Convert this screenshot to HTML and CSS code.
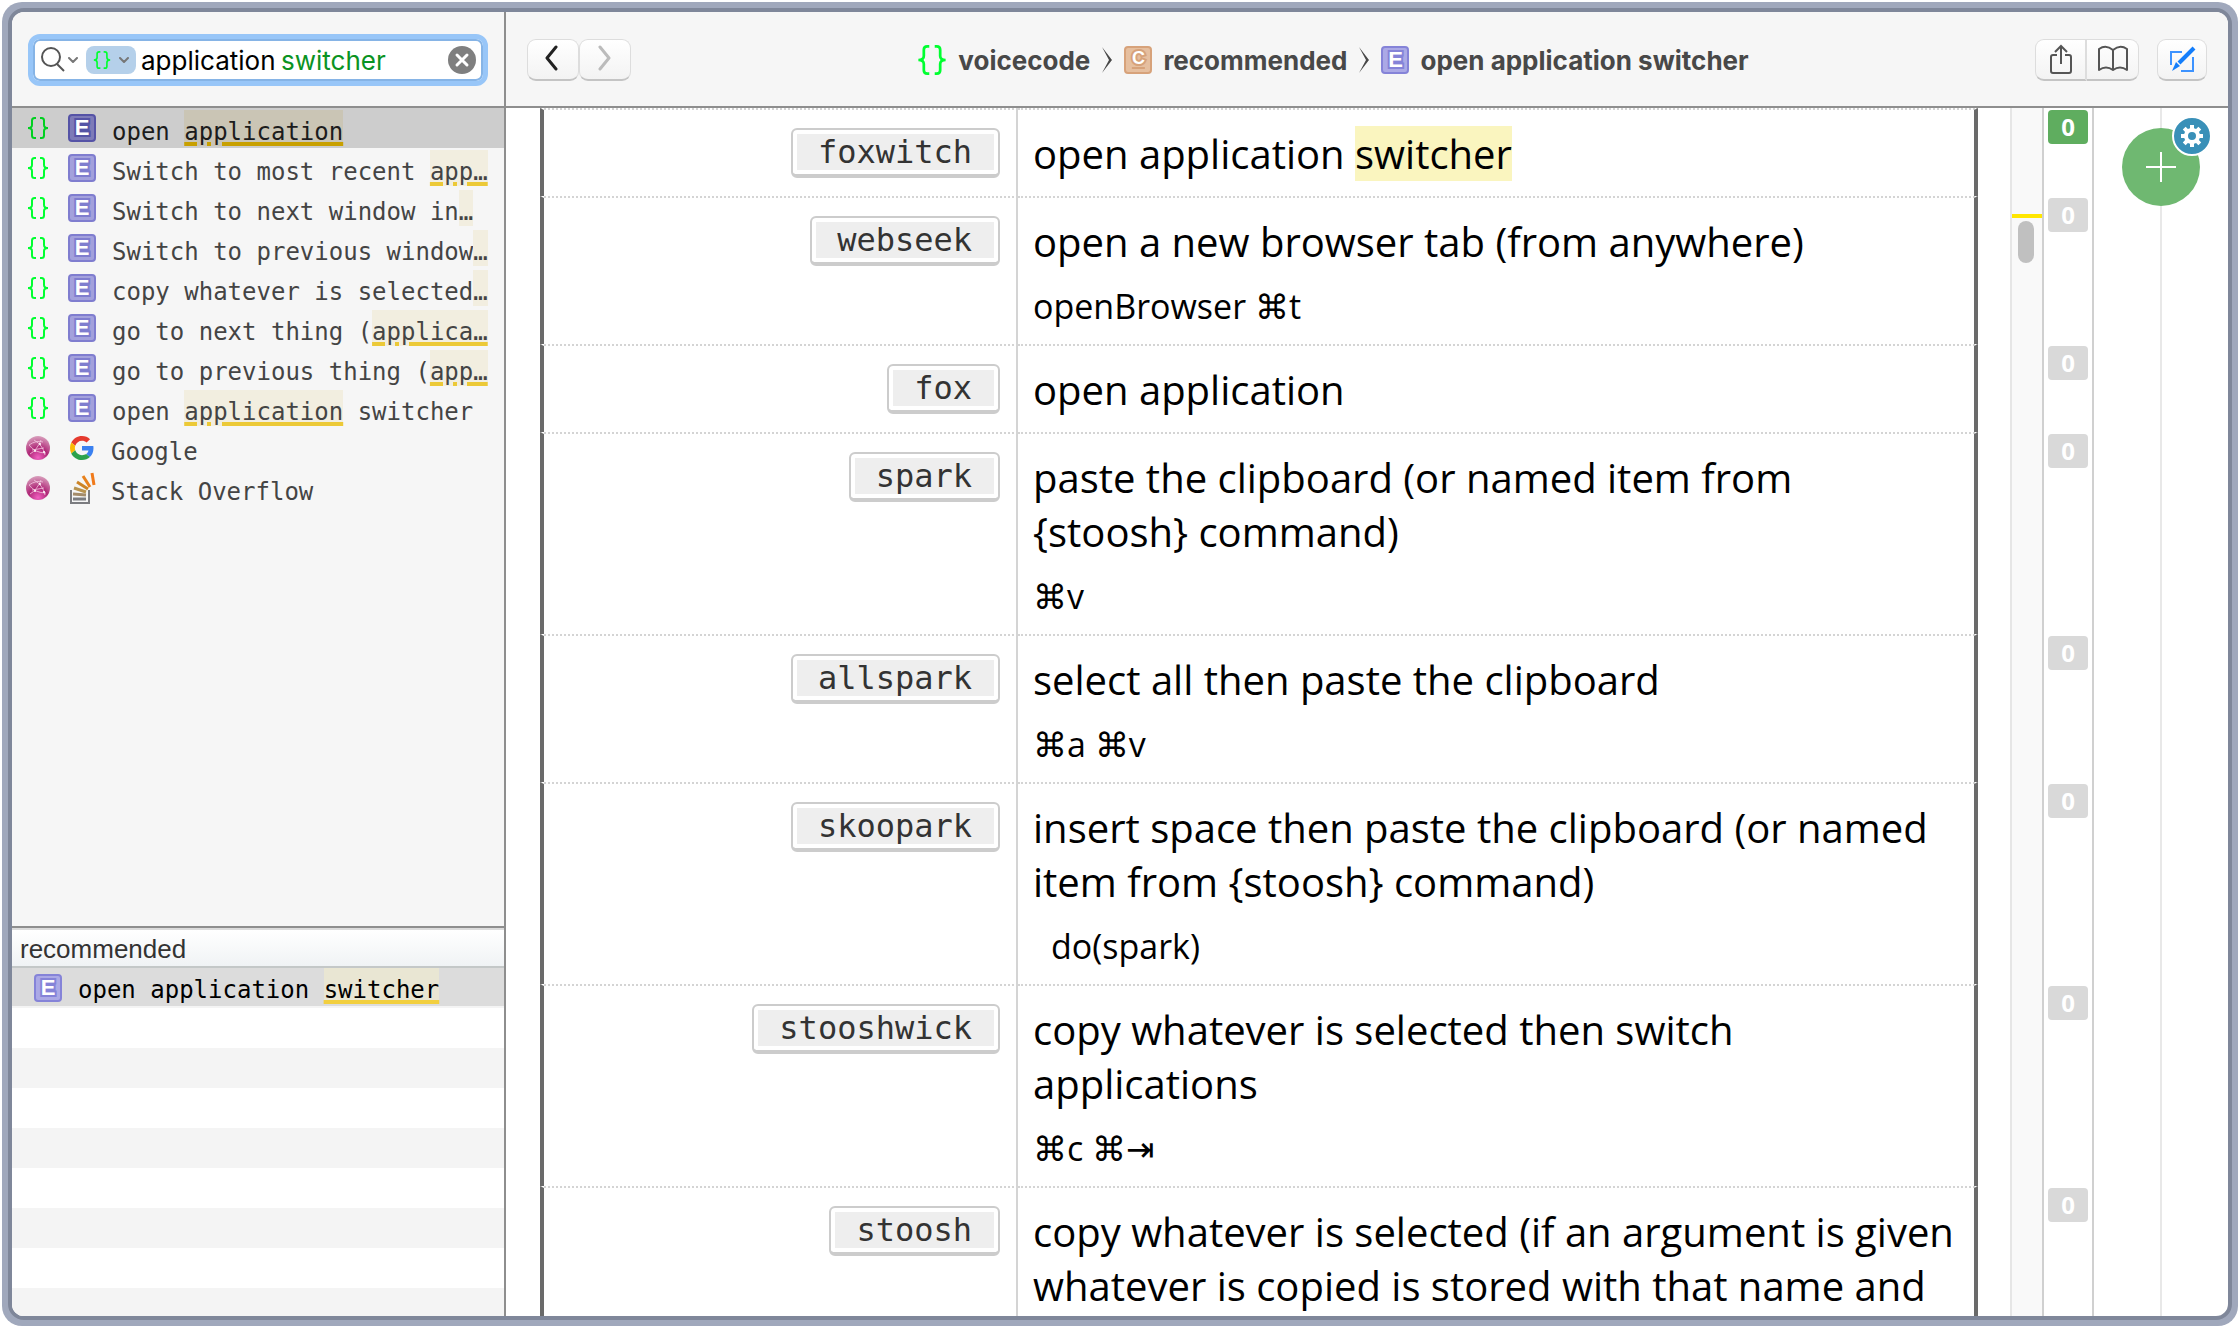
FILE: index.html
```html
<!DOCTYPE html>
<html lang="en">
<head>
<meta charset="utf-8">
<meta name="viewport" content="width=device-width, initial-scale=1">
<title>open application switcher</title>
<link rel="stylesheet" href="styles.css">
</head>
<body>
<svg class="sprite" aria-hidden="true">
  <defs>
    <radialGradient id="globe-fill" cx="50%" cy="90%" r="90%">
      <stop offset="0" stop-color="#f060c0"/>
      <stop offset=".45" stop-color="#b02878"/>
      <stop offset="1" stop-color="#d9a0bd"/>
    </radialGradient>
  </defs>
  <symbol id="braces" viewBox="0 0 22 22">
    <path d="M9 1H7.500Q5 1 5 3.500V8Q5 11 1 11Q5 11 5 14V18.500Q5 21 7.500 21H9M13 1H14.500Q17 1 17 3.500V8Q17 11 21 11Q17 11 17 14V18.500Q17 21 14.500 21H13" fill="none" stroke="currentColor" stroke-width="2"/>
  </symbol>
  <symbol id="chevron" viewBox="0 0 10 6">
    <path d="M1 1l4 4 4-4" fill="none" stroke="currentColor" stroke-width="2" stroke-linecap="round" stroke-linejoin="round"/>
  </symbol>
  <symbol id="separator" viewBox="0 0 12 26">
    <path d="M1 0L11 13L1 26L8 13z" fill="currentColor"/>
  </symbol>
  <symbol id="globe" viewBox="0 0 24 24">
    <circle cx="12" cy="12" r="12" fill="url(#globe-fill)"/>
    <path d="M3 9Q9 17 20 17M4 18Q11 14 15 4M8 4Q17 9 19 19M3 9Q10 4 17 6M6 14L18 12" fill="none" stroke="#f3c6df" stroke-width="1" opacity=".8"/>
    <circle cx="9" cy="15" r="1" fill="#fff"/><circle cx="14" cy="8" r="1" fill="#fff"/><circle cx="18" cy="16" r="1" fill="#fff"/>
  </symbol>
  <symbol id="google" viewBox="0 0 48 48">
    <path fill="#e53a2e" d="M24 9.500c3.540 0 6.710 1.220 9.210 3.600l6.850-6.850C35.900 2.380 30.470 0 24 0 14.620 0 6.510 5.380 2.560 13.220l7.980 6.190C12.430 13.720 17.740 9.500 24 9.500z"/>
    <path fill="#3a80f0" d="M46.980 24.550c0-1.570-.15-3.090-.38-4.550H24v9.020h12.940c-.58 2.960-2.260 5.480-4.780 7.180l7.730 6c4.510-4.180 7.090-10.360 7.090-17.650z"/>
    <path fill="#fbb905" d="M10.530 28.590c-.48-1.450-.76-2.990-.76-4.590s.27-3.140.76-4.590l-7.980-6.190C.92 16.460 0 20.120 0 24c0 3.880.92 7.540 2.560 10.780l7.970-6.190z"/>
    <path fill="#2ba24c" d="M24 48c6.480 0 11.930-2.130 15.890-5.810l-7.730-6c-2.150 1.450-4.920 2.300-8.160 2.300-6.260 0-11.570-4.220-13.470-9.910l-7.980 6.190C6.510 42.620 14.620 48 24 48z"/>
  </symbol>
  <symbol id="stack" viewBox="0 0 28 34">
    <path d="M3 19v13h18V19" fill="none" stroke="#7b7c80" stroke-width="2"/>
    <g fill="none" stroke-width="3">
      <path d="M5 28H18" stroke="#7b7c80"/>
      <path d="M5 23l13 1" stroke="#a38b6a"/>
      <path d="M6 17l12 4" stroke="#b8934f"/>
      <path d="M9 11l11 7" stroke="#cc8426"/>
      <path d="M15 5l7 11" stroke="#e8811c"/>
      <path d="M24 2l2 12" stroke="#f17a1a"/>
    </g>
  </symbol>
</svg>

<div class="window">
  <div class="frame">
    <aside class="sidebar">
      <form class="search-bar" role="search">
        <div class="search">
          <button type="button" class="search-scope" aria-label="Search options">
            <svg width="26" height="26" viewBox="0 0 26 26"><circle cx="11" cy="10" r="9" fill="none" stroke="#555" stroke-width="2"/><path d="M17 17l7 7" stroke="#555" stroke-width="2"/></svg>
            <svg class="chev" width="10" height="6"><use href="#chevron"/></svg>
          </button>
          <button type="button" class="docset" aria-label="voicecode docset">
            <svg class="green" width="18" height="20"><use href="#braces"/></svg>
            <svg class="chev" width="10" height="6"><use href="#chevron"/></svg>
          </button>
          <input id="query" class="query" type="text" value="application" aria-label="Search documentation">
          <label class="subquery" for="query">switcher</label>
          <button type="reset" class="clear" aria-label="Clear">
            <svg width="28" height="28" viewBox="0 0 28 28"><circle cx="14" cy="14" r="14" fill="#7f7f7f"/><path d="M9 9l10 10M19 9L9 19" stroke="#fff" stroke-width="3" stroke-linecap="round"/></svg>
          </button>
        </div>
      </form>
      <ul class="results">
        <li class="selected"><svg class="lead green"><use href="#braces"/></svg><span class="tag entry">E</span><span class="name">open <mark>application</mark></span></li>
        <li><svg class="lead green"><use href="#braces"/></svg><span class="tag entry">E</span><span class="name">Switch to most recent <mark>app…</mark></span></li>
        <li><svg class="lead green"><use href="#braces"/></svg><span class="tag entry">E</span><span class="name">Switch to next window in<mark class="cut">…</mark></span></li>
        <li><svg class="lead green"><use href="#braces"/></svg><span class="tag entry">E</span><span class="name">Switch to previous window<mark class="cut">…</mark></span></li>
        <li><svg class="lead green"><use href="#braces"/></svg><span class="tag entry">E</span><span class="name">copy whatever is selected<mark class="cut">…</mark></span></li>
        <li><svg class="lead green"><use href="#braces"/></svg><span class="tag entry">E</span><span class="name">go to next thing (<mark>applica…</mark></span></li>
        <li><svg class="lead green"><use href="#braces"/></svg><span class="tag entry">E</span><span class="name">go to previous thing (<mark>app…</mark></span></li>
        <li><svg class="lead green"><use href="#braces"/></svg><span class="tag entry">E</span><span class="name">open <mark>application</mark> switcher</span></li>
        <li><svg class="lead globe"><use href="#globe"/></svg><svg class="site"><use href="#google"/></svg><span class="name">Google</span></li>
        <li><svg class="lead globe"><use href="#globe"/></svg><svg class="site stack"><use href="#stack"/></svg><span class="name">Stack Overflow</span></li>
      </ul>
      <section class="outline">
        <h2>recommended</h2>
        <ul>
          <li><span class="tag entry light">E</span><span class="name">open application <mark>switcher</mark></span></li>
        </ul>
      </section>
    </aside>

    <main class="main">
      <header class="toolbar">
        <div class="nav">
          <button type="button" aria-label="Back"><svg width="16" height="26" viewBox="0 0 16 26"><path d="M12 2L3 13l9 11" fill="none" stroke="#222" stroke-width="3" stroke-linecap="round" stroke-linejoin="round"/></svg></button>
          <button type="button" aria-label="Forward"><svg width="16" height="26" viewBox="0 0 16 26"><path d="M4 2l9 11L4 24" fill="none" stroke="#bbb" stroke-width="3" stroke-linecap="round" stroke-linejoin="round"/></svg></button>
        </div>
        <nav class="crumbs" aria-label="Breadcrumb">
          <svg class="green" width="30" height="30"><use href="#braces"/></svg>
          <a href="#voicecode">voicecode</a>
          <svg class="sep" width="12" height="26"><use href="#separator"/></svg>
          <span class="tag category">C</span>
          <a href="#recommended">recommended</a>
          <svg class="sep" width="12" height="26"><use href="#separator"/></svg>
          <span class="tag entry light">E</span>
          <a href="#switcher">open application switcher</a>
        </nav>
        <div class="tools">
          <div class="pair">
            <button type="button" aria-label="Share"><svg width="24" height="30" viewBox="0 0 24 30"><path d="M8 11H4Q2 11 2 13V27Q2 29 4 29H20Q22 29 22 27V13Q22 11 20 11H16M12 20V2M6 8l6-6 6 6" fill="none" stroke="#555" stroke-width="2"/></svg></button>
            <button type="button" aria-label="Bookmarks"><svg width="32" height="28" viewBox="0 0 32 28"><path d="M16 5Q9-1 2 4V25Q9 20 16 25Q23 20 30 25V4Q23-1 16 5V25" fill="none" stroke="#555" stroke-width="2" stroke-linejoin="round"/></svg></button>
          </div>
          <button type="button" class="edit" aria-label="Annotate"><svg width="28" height="28" viewBox="0 0 28 28"><path d="M14 7H3V20M13 26H25V12" fill="none" stroke="#3d93ff" stroke-width="2"/><path d="M11 18L26 3" stroke="#147efb" stroke-width="4"/><path d="M8 17l4 4-8 5z" fill="#147efb"/></svg></button>
        </div>
      </header>

      <div class="page">
        <div class="sheet">
          <table class="commands">
            <colgroup><col class="c-key"><col class="c-text"><col class="c-map"><col class="c-score"></colgroup>
            <tbody>
              <tr id="switcher"><th scope="row"><kbd>foxwitch</kbd></th><td><p>open application <mark>switcher</mark></p></td><td></td><td><button type="button" class="score active">0</button></td></tr>
              <tr><th scope="row"><kbd>webseek</kbd></th><td><p>open a new browser tab (from anywhere)</p><p class="keys">openBrowser ⌘t</p></td><td></td><td><button type="button" class="score">0</button></td></tr>
              <tr><th scope="row"><kbd>fox</kbd></th><td><p>open application</p></td><td></td><td><button type="button" class="score">0</button></td></tr>
              <tr><th scope="row"><kbd>spark</kbd></th><td><p>paste the clipboard (or named item from {stoosh} command)</p><p class="keys">⌘v</p></td><td></td><td><button type="button" class="score">0</button></td></tr>
              <tr><th scope="row"><kbd>allspark</kbd></th><td><p>select all then paste the clipboard</p><p class="keys">⌘a ⌘v</p></td><td></td><td><button type="button" class="score">0</button></td></tr>
              <tr><th scope="row"><kbd>skoopark</kbd></th><td><p>insert space then paste the clipboard (or named item from {stoosh} command)</p><p class="keys call">do(spark)</p></td><td></td><td><button type="button" class="score">0</button></td></tr>
              <tr><th scope="row"><kbd>stooshwick</kbd></th><td><p>copy whatever is selected then switch applications</p><p class="keys">⌘c ⌘⇥</p></td><td></td><td><button type="button" class="score">0</button></td></tr>
              <tr><th scope="row"><kbd>stoosh</kbd></th><td><p>copy whatever is selected (if an argument is given whatever is copied is stored with that name and</p></td><td></td><td><button type="button" class="score">0</button></td></tr>
            </tbody>
          </table>
          <div class="scrollbar"><div class="hit"></div><div class="thumb"></div></div>
        </div>
        <aside class="notes">
          <button type="button" class="add" aria-label="Add annotation"><svg width="30" height="30" viewBox="0 0 30 30"><path d="M15 0V30M0 15H30" stroke="#fff" stroke-width="2"/></svg></button>
          <button type="button" class="settings" aria-label="Annotation settings"><svg width="24" height="24" viewBox="0 0 24 24"><circle cx="12" cy="12" r="6" fill="none" stroke="#fff" stroke-width="4"/><path d="M12 1V5M12 19V23M1 12H5M19 12H23M4.200 4.200L7 7M17 17l2.800 2.800M4.200 19.800L7 17M17 7l2.800-2.800" stroke="#fff" stroke-width="4"/></svg></button>
        </aside>
      </div>
    </main>
  </div>
</div>
</body>
</html>
```
FILE: styles.css
```css
* { box-sizing: border-box; }

body {
  margin: 0;
  padding: 2px;
  height: 100vh;
  background: #fff;
  color: #000;
  font-family: Inter, "Liberation Sans", sans-serif;
  font-size: 26px;
}

button, input { font: inherit; color: inherit; border: 0; padding: 0; margin: 0; background: none; }
button { display: flex; align-items: center; justify-content: center; }
svg { display: block; flex: none; }
ul { list-style: none; margin: 0; padding: 0; }
h2, p { margin: 0; }
a { color: inherit; text-decoration: none; }
mark { color: inherit; }

.sprite { position: absolute; width: 0; height: 0; }
.green { color: #00ff30; }

/* window */
.window { height: 100%; padding: 6px; border-radius: 20px; background: #a0a8bc; }
.frame {
  display: flex;
  height: 100%;
  border: 4px solid #7f879a;
  border-radius: 16px;
  background: #fff;
  overflow: hidden;
}

/* sidebar */
.sidebar {
  display: flex;
  flex-direction: column;
  flex: 0 0 494px;
  border-right: 2px solid #8e8e8e;
  background: #f6f6f6;
}
.search-bar { padding: 22px 16px 20px; border-bottom: 2px solid #8e8e8e; }
.search {
  display: flex;
  align-items: center;
  height: 52px;
  padding-left: 7px;
  padding-right: 7px;
  border: 5px solid #98c6f8;
  border-radius: 12px;
  background: #fff;
  box-shadow: inset 0 0 0 2px #86b4e6;
}
.search-scope { gap: 2px; margin-right: 8px; }
.chev { color: #777; }
.docset { gap: 8px; width: 50px; height: 28px; margin-right: 5px; border-radius: 8px; background: #b5d0ea; }
.query { width: 140px; height: 32px; outline: 0; }
.subquery { color: #0a9322; }
.clear { margin-left: auto; }

.results { flex: 1; }
.results li, .outline li { display: flex; height: 40px; overflow: hidden; }
.results li { padding-left: 14px; color: #444; }
.results .selected { background: #cdcdcd; color: #1c1c1c; }
.lead { width: 24px; height: 22px; margin: 9px 18px 0 0; }
.lead.globe { height: 24px; margin-top: 8px; }
.site { width: 24px; height: 24px; margin: 8px 17px 0 2px; }
.site.stack { width: 28px; height: 34px; margin: 3px 15px 0 0; }
.name {
  padding-top: 4px;
  font-family: "DejaVu Sans Mono", monospace;
  font-size: 24px;
  line-height: 40px;
  white-space: nowrap;
}
.name mark {
  padding-top: 8px;
  background: #f2eee0;
  text-decoration: underline 4px #ecc937;
  text-underline-offset: 2px;
}
.name .cut { text-decoration: none; }
.selected .name mark { background: #cac5b5; text-decoration-color: #c8a000; }
.selected .green { color: #00d020; }
.results .tag { margin: 6px 16px 0 0; }

.tag {
  flex: none;
  width: 28px;
  height: 28px;
  border: 2px solid;
  border-radius: 4px;
  color: #fff;
  font: bold 22px/24px "Liberation Sans", sans-serif;
  text-align: center;
  paint-order: stroke fill;
}
.entry { border-color: #7f7dcf; background: #a3a1dc; -webkit-text-stroke: 4px #7f7dcf; }
.entry.light { border-color: #8583d8; background: #aba9e6; -webkit-text-stroke-color: #8583d8; }
.selected .entry { border-color: #5553a6; background: #7d7bb8; -webkit-text-stroke-color: #5553a6; }
.category {
  border-color: #d7a27a;
  background: #e6bf9f;
  font-size: 18px;
  line-height: 20px;
  text-decoration: underline 2px;
  text-underline-offset: 3px;
  -webkit-text-stroke: 4px #d7a27a;
}

.outline { flex: 0 0 390px; border-top: 2px solid #8e8e8e; }
.outline h2 {
  height: 40px;
  padding-left: 8px;
  border-top: 2px solid #dcdcdc;
  border-bottom: 2px solid #c4c8c8;
  background: linear-gradient(#fff, #f0f3f5);
  color: #333;
  font: 26px/38px "Liberation Sans", sans-serif;
}
.outline ul {
  height: 348px;
  background: repeating-linear-gradient(#f4f4f4 0 40px, #fff 40px 80px);
}
.outline li { height: 38px; padding-left: 22px; background: #dcdcdc; }
.outline .tag { margin: 6px 16px 0 0; }
.outline .name { padding-top: 1px; }
.outline .name { line-height: 42px; }
.outline mark { background: #e9e6d3; text-decoration-color: #f2cf3f; }

/* toolbar */
.main { display: flex; flex-direction: column; flex: 1; min-width: 0; }
.toolbar {
  display: flex;
  align-items: center;
  justify-content: space-between;
  height: 96px;
  flex: none;
  padding: 2px 21px 0;
  border-bottom: 2px solid #8e8e8e;
  background: #f6f6f6;
}
.toolbar button {
  height: 42px;
  border: 1px solid #ddd;
  border-bottom: 2px solid #c4c4c4;
  border-radius: 9px;
  background: linear-gradient(#fff, #f3f3f3);
}
.nav, .pair, .tools { display: flex; }
.nav button { width: 52px; padding: 0 2px 4px 0; }
.tools { gap: 18px; }
.pair button { width: 52px; padding-bottom: 2px; }
.pair button:first-child { border-right: 2px solid #ddd; border-radius: 9px 0 0 9px; }
.pair button:last-child { border-left: 0; border-radius: 0 9px 9px 0; }
.edit { width: 50px; padding-bottom: 2px; }

.crumbs { display: flex; align-items: center; gap: 11px; color: #484848; font-weight: 700; }

/* document */
.page { display: flex; flex: 1; min-height: 0; overflow: hidden; }
.sheet { position: relative; flex: 1; padding-left: 34px; border-right: 2px solid #d0d0d0; }
.commands { width: 100%; table-layout: fixed; border-collapse: separate; border-spacing: 0; }
.c-key { width: 478px; }
.c-map { width: 66px; }
.c-score { width: 48px; }
.commands th, .commands td { padding: 0; vertical-align: top; }
.commands th {
  padding: 18px 16px 0 0;
  border-top: 2px dotted #d4d4d4;
  border-left: 4px solid #6a6a6a;
  border-right: 2px solid #d4d4d4;
  text-align: right;
  font-weight: normal;
}
.commands td:nth-child(2) {
  padding: 17px 20px 15px 15px;
  border-top: 2px dotted #d4d4d4;
  border-right: 4px solid #6a6a6a;
}
.commands td:nth-child(4) { padding: 2px 4px; }
.commands p { font: 40px/54px "Open Sans", "Noto Sans", sans-serif; }
.commands p mark { background: #faf5bf; }
.commands .keys { padding-top: 14px; font-size: 34px; line-height: 46px; }
.commands .call { padding-left: 18px; }

kbd {
  display: inline-block;
  height: 50px;
  padding: 0 26px 0 25px;
  border: 2px solid #ccc;
  border-bottom-width: 4px;
  border-radius: 6px;
  background: #eee;
  box-shadow: inset 0 0 0 4px #fff;
  color: #333;
  font: 32px/44px "DejaVu Sans Mono", monospace;
}

.score {
  width: 40px;
  height: 34px;
  border-radius: 4px;
  background: #d9d9d9;
  color: #fff;
  font: bold 24px/34px "Open Sans", sans-serif;
}
.score.active { background: #5fad5f; }

.scrollbar {
  position: absolute;
  top: 0;
  right: 48px;
  bottom: 0;
  width: 34px;
  padding-top: 106px;
  border: 2px solid #e6e6e6;
  border-width: 0 2px;
  border-right-color: #d0d0d0;
  background: #f9f9f9;
}
.hit { height: 4px; background: #ffe600; }
.thumb { width: 16px; height: 42px; margin: 3px 0 0 6px; border-radius: 8px; background: #c0c0c0; }

.notes {
  position: relative;
  flex: 0 0 134px;
  padding: 20px 28px;
  background: linear-gradient(#e8e8e8, #e8e8e8) 66px 0 / 2px 100% no-repeat;
}
.add { width: 78px; height: 78px; border-radius: 50%; background: #6fb871; }
.settings {
  position: absolute;
  top: 8px;
  right: 16px;
  width: 40px;
  height: 40px;
  border: 2px solid #fff;
  border-radius: 50%;
  background: #3990b8;
}
```
